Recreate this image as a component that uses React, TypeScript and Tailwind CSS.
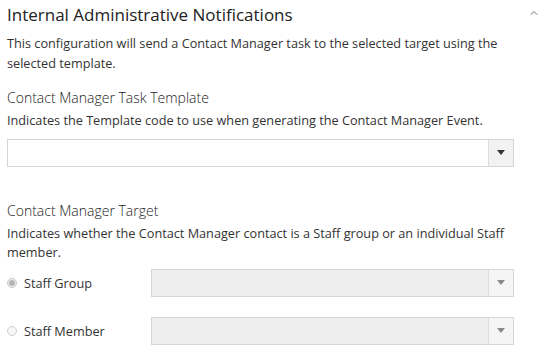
import { ChevronUp } from "lucide-react";

function SelectBox({ disabled }: { disabled?: boolean }) {
  return (
    <div
      className={
        "flex h-[28px] w-full border border-[#d6d6d6] " +
        (disabled ? "bg-[#eeeeee]" : "bg-white")
      }
    >
      <div className="flex-1" />
      <div
        className={
          "flex w-[25px] items-center justify-center border-l border-[#dddddd] " +
          (disabled ? "bg-[#f5f5f5]" : "bg-[#f2f2f2]")
        }
      >
        <span
          className={
            "h-0 w-0 border-x-[4px] border-t-[5px] border-x-transparent " +
            (disabled ? "border-t-[#888]" : "border-t-[#333]")
          }
        />
      </div>
    </div>
  );
}

function RadioRow({ label, checked }: { label: string; checked?: boolean }) {
  return (
    <div className="flex items-center">
      <div className="flex w-[144px] items-center gap-[7px]">
        <span
          className={
            "flex h-[10px] w-[10px] items-center justify-center rounded-full border " +
            (checked ? "border-[#c8c8c8] bg-[#eeeeee]" : "border-[#cfcfcf] bg-[#f7f7f7]")
          }
        >
          {checked && <span className="h-[6px] w-[6px] rounded-full bg-[#b5b5b5]" />}
        </span>
        <span className="text-[12.7px] leading-[20px]">{label}</span>
      </div>
      <div className="flex-1">
        <SelectBox disabled />
      </div>
    </div>
  );
}

export default function App() {
  return (
    <div className="h-[355px] w-[549px] overflow-hidden bg-white font-['Open_Sans',sans-serif] text-[#333]">
      <div className="flex pl-[7px] pr-[35px] pt-[3px]">
        <div className="flex-1">
          <h2 className="text-[17px] leading-[24px] text-[#222]">Internal Administrative Notifications</h2>
          <p className="mt-[7px] text-[12.7px] leading-[19.5px]">
            This configuration will send a Contact Manager task to the selected target using the selected template.
          </p>

          <h3 className="mt-[14px] text-[14px] font-light leading-[21px] text-[#222]">Contact Manager Task Template</h3>
          <p className="mt-[3px] text-[12.7px] leading-[19.5px]">
            Indicates the Template code to use when generating the Contact Manager Event.
          </p>
          <div className="mt-[8px]">
            <SelectBox />
          </div>

          <h3 className="mt-[33px] text-[14px] font-light leading-[21px] text-[#222]">Contact Manager Target</h3>
          <p className="mt-[3px] text-[12.7px] leading-[19.5px]">
            Indicates whether the Contact Manager contact is a Staff group or an individual Staff member.
          </p>
          <div className="mt-[6px] flex flex-col gap-[20px]">
            <RadioRow label="Staff Group" checked />
            <RadioRow label="Staff Member" />
          </div>
        </div>
        <div className="relative w-0">
          <ChevronUp className="absolute left-[14px] top-[4px] text-[#444]" size={12} strokeWidth={1.5} />
        </div>
      </div>
    </div>
  );
}
